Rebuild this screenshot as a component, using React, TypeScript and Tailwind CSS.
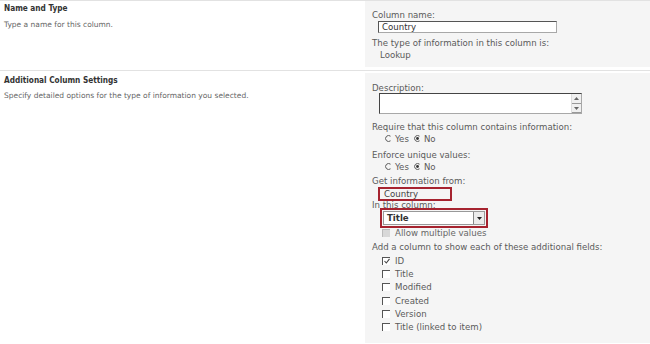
import React from "react";

const right = "text-[8.6px] leading-[12px] text-[#5a5a5a]";

function Radio({ checked }: { checked?: boolean }) {
  return (
    <svg width="7" height="7" viewBox="0 0 7 7" className="shrink-0">
      <path d="M5.5 1.2 A3 3 0 1 0 5.5 5.8" fill="none" stroke="#555" strokeWidth="1" />
      {checked && <circle cx="3.5" cy="3.5" r="1.4" fill="#333" />}
    </svg>
  );
}

function Check({ checked, disabled }: { checked?: boolean; disabled?: boolean }) {
  return (
    <span
      className={`w-[8px] h-[8px] shrink-0 flex items-center justify-center border-t border-l ${
        disabled ? "border-[#bbb] bg-[#d8d8d8]" : "border-[#555] bg-white"
      }`}
    >
      {checked && (
        <svg width="6" height="6" viewBox="0 0 6 6">
          <path d="M0.5 3 L2.3 5 L5.5 0.8" fill="none" stroke="#444" strokeWidth="1.1" />
        </svg>
      )}
    </span>
  );
}

export default function App() {
  const fields = ["ID", "Title", "Modified", "Created", "Version", "Title (linked to item)"];

  return (
    <div
      className="w-[650px] h-[344px] bg-white overflow-hidden"
      style={{ fontFamily: "'DejaVu Sans', Verdana, sans-serif" }}
    >
      {/* Name and Type */}
      <div className="flex h-[71px] border-t border-[#e2e2e2] border-b">
        <div className="w-[365px] pl-[4px] pt-[1px]" style={{ fontFamily: "'DejaVu Sans Condensed', 'DejaVu Sans', sans-serif" }}>
          <div className="text-[8.2px] leading-[12px] font-bold text-[#333]">Name and Type</div>
          <div className="mt-[5px] text-[7.5px] leading-[12px] text-[#666]" style={{ fontFamily: "'DejaVu Sans', sans-serif" }}>
            Type a name for this column.
          </div>
        </div>
        <div className={`flex-1 bg-[#f5f5f5] pl-[7px] pt-[8px] mb-[3px] ${right}`}>
          <div>Column name:</div>
          <div className="ml-[6px] w-[179px] h-[12px] bg-white border border-[#a8a8a8] border-t-[#555] border-l-[#555] flex items-center pl-[3px] text-[#333] leading-[10px]">
            Country
          </div>
          <div className="mt-[4px]">The type of information in this column is:</div>
          <div className="ml-[8px]">Lookup</div>
        </div>
      </div>

      {/* Additional Column Settings */}
      <div className="flex h-[272px]">
        <div className="w-[365px] pl-[4px] pt-[3px]" style={{ fontFamily: "'DejaVu Sans Condensed', 'DejaVu Sans', sans-serif" }}>
          <div className="text-[8.2px] leading-[12px] font-bold text-[#333]">Additional Column Settings</div>
          <div className="mt-[4px] text-[7.5px] leading-[12px] text-[#666]" style={{ fontFamily: "'DejaVu Sans', sans-serif" }}>
            Specify detailed options for the type of information you selected.
          </div>
        </div>
        <div className={`flex-1 bg-[#f5f5f5] mt-[2px] pl-[7px] pt-[9px] ${right}`}>
          <div>Description:</div>
          <div className="ml-[7px] -mt-[1px] w-[203px] h-[21px] bg-white border border-[#a8a8a8] border-t-[#444] border-l-[#444] flex justify-end">
            <div className="flex flex-col w-[10px] border-l border-[#ddd]">
              <div className="h-[10px] flex items-center justify-center bg-[#f0f0f0] border-b border-[#999]">
                <svg width="5" height="3" viewBox="0 0 5 3"><path d="M0 3 L2.5 0 L5 3Z" fill="#666" /></svg>
              </div>
              <div className="flex-1 flex items-center justify-center bg-[#f0f0f0] border-b border-[#999]">
                <svg width="5" height="3" viewBox="0 0 5 3"><path d="M0 0 L2.5 3 L5 0Z" fill="#666" /></svg>
              </div>
            </div>
          </div>
          <div className="mt-[7px]">Require that this column contains information:</div>
          <div className="flex items-center ml-[13px] h-[11px]">
            <Radio />
            <span className="ml-[3px]">Yes</span>
            <span className="ml-[5px]"><Radio checked /></span>
            <span className="ml-[3px]">No</span>
          </div>
          <div className="mt-[5px]">Enforce unique values:</div>
          <div className="flex items-center ml-[13px] h-[11px]">
            <Radio />
            <span className="ml-[3px]">Yes</span>
            <span className="ml-[5px]"><Radio checked /></span>
            <span className="ml-[3px]">No</span>
          </div>
          <div className="mt-[3px]">Get information from:</div>
          <div className="ml-[6px] w-[74px] h-[14px] border-2 border-[#a6232f] flex items-center pl-[4px] text-[#444] leading-[10px]">
            Country
          </div>
          <div className="-mt-[2px]">In this column:</div>
          <div className="ml-[8px] -mt-[3px] w-[108px] h-[20px] border-2 border-[#a6232f] flex items-center p-[1px]">
            <div className="flex-1 h-[14px] bg-white border border-[#999] flex items-center justify-between pl-[3px] text-[#333] font-bold leading-[10px]">
              <span>Title</span>
              <span className="w-[11px] h-[12px] bg-[#ececec] border-l border-[#888] flex items-center justify-center">
                <svg width="5" height="3" viewBox="0 0 5 3"><path d="M0 0 L2.5 3 L5 0Z" fill="#222" /></svg>
              </span>
            </div>
          </div>
          <div className="flex items-center ml-[10px] h-[10px] text-[#666]">
            <Check disabled />
            <span className="ml-[5px]">Allow multiple values</span>
          </div>
          <div className="mt-[3px] whitespace-nowrap">Add a column to show each of these additional fields:</div>
          <div className="ml-[10px] mt-[1px] flex flex-col">
            {fields.map((f, i) => (
              <div key={f} className="flex items-center h-[13.3px]">
                <Check checked={i === 0} />
                <span className="ml-[5px]">{f}</span>
              </div>
            ))}
          </div>
        </div>
      </div>
    </div>
  );
}
